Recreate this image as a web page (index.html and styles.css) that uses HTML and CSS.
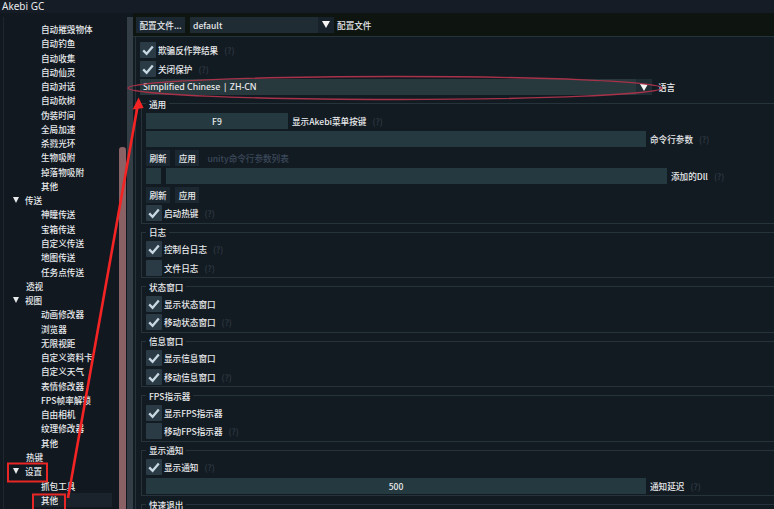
FILE: index.html
```html
<!DOCTYPE html>
<html lang="zh-CN">
<head>
    <meta charset="UTF-8">
    <title>Akebi GC</title>
    <link rel="stylesheet" href="styles.css">
</head>
<body>
    <div class="titlebar">Akebi GC</div>

    <div class="main">
        <aside class="sidebar">
            <div class="tree">
                <div class="node l2">自动摧毁物体</div>
                <div class="node l2">自动钓鱼</div>
                <div class="node l2">自动收集</div>
                <div class="node l2">自动仙灵</div>
                <div class="node l2">自动对话</div>
                <div class="node l2">自动砍树</div>
                <div class="node l2">伪装时间</div>
                <div class="node l2">全局加速</div>
                <div class="node l2">杀戮光环</div>
                <div class="node l2">生物吸附</div>
                <div class="node l2">掉落物吸附</div>
                <div class="node l2">其他</div>
                <div class="node open"><span class="tri"></span>传送</div>
                <div class="node l2">神瞳传送</div>
                <div class="node l2">宝箱传送</div>
                <div class="node l2">自定义传送</div>
                <div class="node l2">地图传送</div>
                <div class="node l2">任务点传送</div>
                <div class="node l1">透视</div>
                <div class="node open"><span class="tri"></span>视图</div>
                <div class="node l2">动画修改器</div>
                <div class="node l2">浏览器</div>
                <div class="node l2">无限视距</div>
                <div class="node l2">自定义资料卡</div>
                <div class="node l2">自定义天气</div>
                <div class="node l2">表情修改器</div>
                <div class="node l2">FPS帧率解锁</div>
                <div class="node l2">自由相机</div>
                <div class="node l2">纹理修改器</div>
                <div class="node l2">其他</div>
                <div class="node l1">热键</div>
                <div class="node open"><span class="tri"></span>设置</div>
                <div class="node l2">抓包工具</div>
                <div class="node l2 selected">其他</div>
            </div>
            <div class="scrollbar"><div class="thumb"></div></div>
        </aside>

        <div class="splitter"></div>

        <section class="settings">
            <div class="profile-bar">
                <div class="btn">配置文件...</div>
                <div class="combo profile">
                    <span class="value">default</span>
                    <span class="arrow"></span>
                </div>
                <span class="combo-label">配置文件</span>
            </div>

            <div class="panel">
                <div class="row">
                    <span class="check on"><svg viewBox="0 0 16 16"><polyline points="3.2,8.4 6.6,11.8 12.8,4.6"/></svg></span>
                    <span>欺骗反作弊结果</span><span class="hint">(?)</span>
                </div>
                <div class="row">
                    <span class="check on"><svg viewBox="0 0 16 16"><polyline points="3.2,8.4 6.6,11.8 12.8,4.6"/></svg></span>
                    <span>关闭保护</span><span class="hint">(?)</span>
                </div>
                <div class="row">
                    <div class="combo lang">
                        <span class="value">Simplified Chinese | ZH-CN</span>
                        <span class="arrow"></span>
                    </div>
                    <span class="combo-label">语言</span>
                </div>

                <div class="group">
                    <div class="group-title">通用</div>
                    <div class="group-body">
                        <div class="row">
                            <div class="field hotkey">F9</div>
                            <span class="field-label">显示Akebi菜单按键</span><span class="hint">(?)</span>
                        </div>
                        <div class="row">
                            <div class="field wide"></div>
                            <span class="field-label">命令行参数</span><span class="hint">(?)</span>
                        </div>
                        <div class="row buttons">
                            <div class="btn">刷新</div>
                            <div class="btn">应用</div>
                            <span class="muted">unity命令行参数列表</span>
                        </div>
                        <div class="row">
                            <div class="field tiny"></div>
                            <div class="field dll"></div>
                            <span class="field-label">添加的Dll</span><span class="hint">(?)</span>
                        </div>
                        <div class="row buttons">
                            <div class="btn">刷新</div>
                            <div class="btn">应用</div>
                        </div>
                        <div class="row">
                            <span class="check on"><svg viewBox="0 0 16 16"><polyline points="3.2,8.4 6.6,11.8 12.8,4.6"/></svg></span>
                            <span>启动热键</span><span class="hint">(?)</span>
                        </div>
                    </div>
                </div>

                <div class="group">
                    <div class="group-title">日志</div>
                    <div class="group-body">
                        <div class="row">
                            <span class="check on"><svg viewBox="0 0 16 16"><polyline points="3.2,8.4 6.6,11.8 12.8,4.6"/></svg></span>
                            <span>控制台日志</span><span class="hint">(?)</span>
                        </div>
                        <div class="row">
                            <span class="check"></span>
                            <span>文件日志</span><span class="hint">(?)</span>
                        </div>
                    </div>
                </div>

                <div class="group">
                    <div class="group-title">状态窗口</div>
                    <div class="group-body">
                        <div class="row">
                            <span class="check on"><svg viewBox="0 0 16 16"><polyline points="3.2,8.4 6.6,11.8 12.8,4.6"/></svg></span>
                            <span>显示状态窗口</span>
                        </div>
                        <div class="row">
                            <span class="check on"><svg viewBox="0 0 16 16"><polyline points="3.2,8.4 6.6,11.8 12.8,4.6"/></svg></span>
                            <span>移动状态窗口</span><span class="hint">(?)</span>
                        </div>
                    </div>
                </div>

                <div class="group">
                    <div class="group-title">信息窗口</div>
                    <div class="group-body">
                        <div class="row">
                            <span class="check on"><svg viewBox="0 0 16 16"><polyline points="3.2,8.4 6.6,11.8 12.8,4.6"/></svg></span>
                            <span>显示信息窗口</span>
                        </div>
                        <div class="row">
                            <span class="check on"><svg viewBox="0 0 16 16"><polyline points="3.2,8.4 6.6,11.8 12.8,4.6"/></svg></span>
                            <span>移动信息窗口</span><span class="hint">(?)</span>
                        </div>
                    </div>
                </div>

                <div class="group">
                    <div class="group-title">FPS指示器</div>
                    <div class="group-body">
                        <div class="row">
                            <span class="check on"><svg viewBox="0 0 16 16"><polyline points="3.2,8.4 6.6,11.8 12.8,4.6"/></svg></span>
                            <span>显示FPS指示器</span>
                        </div>
                        <div class="row">
                            <span class="check"></span>
                            <span>移动FPS指示器</span><span class="hint">(?)</span>
                        </div>
                    </div>
                </div>

                <div class="group">
                    <div class="group-title">显示通知</div>
                    <div class="group-body">
                        <div class="row">
                            <span class="check on"><svg viewBox="0 0 16 16"><polyline points="3.2,8.4 6.6,11.8 12.8,4.6"/></svg></span>
                            <span>显示通知</span><span class="hint">(?)</span>
                        </div>
                        <div class="row">
                            <div class="field wide">500</div>
                            <span class="field-label">通知延迟</span><span class="hint">(?)</span>
                        </div>
                    </div>
                </div>

                <div class="group">
                    <div class="group-title">快速退出</div>
                    <div class="group-body">
                        <div class="row"></div>
                    </div>
                </div>
            </div>
        </section>
    </div>

    <!-- red markup drawn over the screenshot -->
    <svg class="annotations" viewBox="0 0 774 509">
        <ellipse cx="395" cy="88" rx="267" ry="11.5" fill="none" stroke="#a8324a" stroke-width="1.4"/>
        <line x1="68" y1="498" x2="137.6" y2="106" stroke="#f42424" stroke-width="2.6"/>
        <polygon points="138.6,97.5 132.6,109.5 143.6,108" fill="#f42424"/>
        <rect x="8" y="463.5" width="39" height="18" fill="none" stroke="#e82626" stroke-width="2"/>
        <rect x="33" y="494.5" width="32" height="20" fill="none" stroke="#e82626" stroke-width="2"/>
    </svg>
</body>
</html>
```

FILE: styles.css
```css
:root {
    --text: #e8eaec;
    --line: #27333b;
    --frame: #243a40;
    --check-bg: #2a3b45;
    --btn-bg: #1c2831;
}

* {
    box-sizing: border-box;
}

body {
    margin: 0;
    width: 774px;
    height: 509px;
    overflow: hidden;
    position: relative;
    background-color: #111920;
    color: var(--text);
    font-family: "Noto Sans CJK SC", "Noto Sans", sans-serif;
    font-size: 8.6px;
    font-weight: 500;
    line-height: 16px;
}

.titlebar {
    height: 13px;
    padding-left: 2px;
    background-color: #151c26;
    font-family: "Noto Sans", sans-serif;
    font-size: 10px;
    font-weight: 400;
    line-height: 13px;
}

.main {
    display: flex;
    height: 496px;
}

/* left tree */
.sidebar {
    display: flex;
    width: 127px;
    background-color: #111820;
}

.tree {
    width: 116px;
    margin-left: 3px;
    margin-top: 4px;
    padding-top: 5px;
    border-left: 1px solid #1e272f;
}

.node {
    display: flex;
    align-items: center;
    height: 14.27px;
    line-height: 14.27px;
    white-space: nowrap;
}

.node.l1 {
    padding-left: 22px;
}

.node.l2 {
    padding-left: 37px;
}

.node.open {
    padding-left: 9px;
}

.node.selected {
    margin-left: 29px;
    padding-left: 8px;
    width: 79px;
    background-color: #1a232c;
}

.tri {
    width: 0;
    height: 0;
    margin-right: 6px;
    border-left: 3.5px solid transparent;
    border-right: 3.5px solid transparent;
    border-top: 6px solid var(--text);
}

.scrollbar {
    width: 7px;
    margin-top: 4px;
}

.thumb {
    margin-top: 130px;
    height: 380px;
    border-radius: 3px;
    background-color: #8a6266;
}

.splitter {
    width: 6px;
    margin-top: 4px;
    background-color: #333e47;
}

/* right settings */
.settings {
    flex: 1;
    min-width: 0;
    background-color: #131b22;
}

.profile-bar {
    display: flex;
    align-items: center;
    height: 24px;
    padding-left: 3px;
    background-color: #0e1510;
    border-bottom: 1px solid #24323a;
}

.btn {
    height: 16px;
    padding: 0 3.5px;
    background-color: var(--btn-bg);
    white-space: nowrap;
}

.combo {
    display: flex;
    height: 16px;
    background-color: #1f2c33;
}

.combo .value {
    flex: 1;
    padding-left: 3px;
    white-space: nowrap;
}

.combo .arrow {
    display: flex;
    align-items: center;
    justify-content: center;
    width: 16px;
    background-color: #17212a;
}

.combo .arrow::after {
    content: "";
    border-left: 4.5px solid transparent;
    border-right: 4.5px solid transparent;
    border-top: 7px solid #f4f4f4;
}

.combo.profile {
    width: 144px;
    margin-left: 5px;
}

.combo.lang {
    width: 512px;
    background-color: #28393d;
    font-family: "Noto Sans", sans-serif;
    font-size: 8.8px;
}

.combo.lang .arrow {
    background-color: #1e2c33;
}

.combo-label {
    margin-left: 3px;
}

.panel {
    display: flex;
    flex-direction: column;
    gap: 2.5px;
    height: 472px;
    margin-left: 2px;
    padding: 5px 0 0 4px;
    border-left: 1px solid var(--line);
    overflow: hidden;
}

.row {
    display: flex;
    align-items: center;
    gap: 3px;
    height: 16px;
    white-space: nowrap;
}

.check {
    display: flex;
    align-items: center;
    justify-content: center;
    width: 16px;
    height: 16px;
    margin-right: -1px;
    border-radius: 1px;
    background-color: var(--check-bg);
}

.check svg {
    width: 16px;
    height: 16px;
    fill: none;
    stroke: #c9d7e4;
    stroke-width: 2.3;
}

.hint {
    margin-left: 3px;
    color: #2f3a44;
}

.muted {
    margin-left: 3px;
    color: #3a485a;
}

.buttons {
    gap: 5px;
}

.field {
    height: 16px;
    text-align: center;
    background-color: var(--frame);
}

.field.hotkey {
    width: 142px;
}

.field.wide {
    width: 500px;
}

.field.tiny {
    width: 15px;
    margin-right: 2px;
}

.field.dll {
    width: 501px;
}

.field-label {
    margin-left: 1px;
}

/* framed sections with the title cut into the top edge */
.group {
    margin-top: 6px;
    margin-left: 1px;
    padding: 0 0 1.5px 4px;
    border-left: 1px solid var(--line);
    border-bottom: 1px solid var(--line);
}

.group-title {
    display: flex;
    align-items: center;
    gap: 3px;
    height: 12px;
    margin: -6px 0 3px -5px;
    line-height: 12px;
    white-space: nowrap;
}

.group-title::before {
    content: "";
    width: 5px;
    height: 1px;
    background-color: var(--line);
}

.group-title::after {
    content: "";
    flex: 1;
    height: 1px;
    background-color: var(--line);
}

.group-body {
    display: flex;
    flex-direction: column;
    gap: 2.5px;
}

.annotations {
    position: absolute;
    top: 0;
    left: 0;
    width: 774px;
    height: 509px;
    pointer-events: none;
}
```
